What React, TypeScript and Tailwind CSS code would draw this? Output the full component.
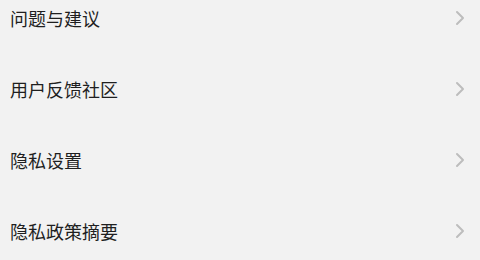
const ITEMS = ['问题与建议', '用户反馈社区', '隐私设置', '隐私政策摘要'];

function Chevron() {
  return (
    <svg width="10" height="16" viewBox="0 0 10 16" fill="none" className="shrink-0">
      <path d="M2 2 L8 8 L2 14" stroke="#bdbdbd" strokeWidth="2" strokeLinecap="round" strokeLinejoin="round" />
    </svg>
  );
}

export default function App() {
  return (
    <div
      className="h-[260px] w-[480px] overflow-hidden bg-[#f2f2f2]"
      style={{ fontFamily: '"Noto Sans CJK SC", "Noto Sans", sans-serif' }}
    >
      <ul className="-mt-[18px]">
        {ITEMS.map((label) => (
          <li key={label} className="flex h-[71px] items-center justify-between pl-[10px] pr-[15px]">
            <span className="text-[18px] leading-none text-[#1f1f1f]">{label}</span>
            <Chevron />
          </li>
        ))}
      </ul>
    </div>
  );
}
